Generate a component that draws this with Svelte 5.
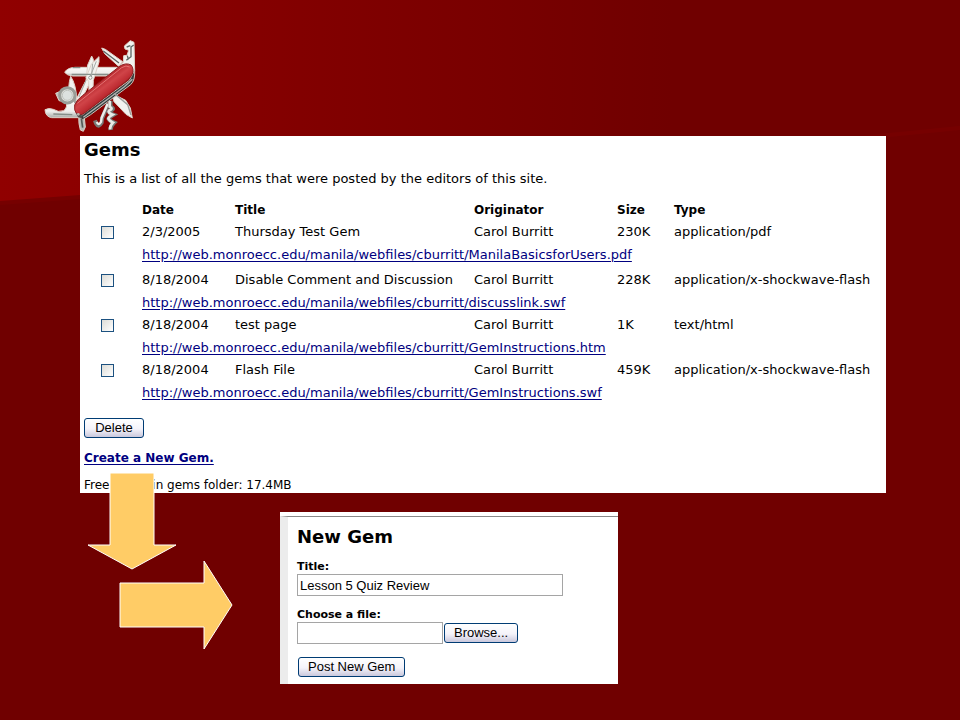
<script>
  const gems = [
    { date: '2/3/2005', title: 'Thursday Test Gem', size: '230K', type: 'application/pdf', file: 'ManilaBasicsforUsers.pdf' },
    { date: '8/18/2004', title: 'Disable Comment and Discussion', size: '228K', type: 'application/x-shockwave-flash', file: 'discusslink.swf' },
    { date: '8/18/2004', title: 'test page', size: '1K', type: 'text/html', file: 'GemInstructions.htm' },
    { date: '8/18/2004', title: 'Flash File', size: '459K', type: 'application/x-shockwave-flash', file: 'GemInstructions.swf' }
  ];
  const base = 'http://web.monroecc.edu/manila/webfiles/cburritt/';
  let title = $state('Lesson 5 Quiz Review');
  let path = $state('');
</script>

<div class="slide">
  <svg class="swoosh" viewBox="0 0 960 720" preserveAspectRatio="none" aria-hidden="true">
    <defs>
      <linearGradient id="glow" x1="0" x2="1" y1="0" y2="0">
        <stop offset="0" stop-color="#900000" />
        <stop offset=".12" stop-color="#8b0000" />
        <stop offset=".7" stop-color="#700000" />
        <stop offset="1" stop-color="#700000" />
      </linearGradient>
    </defs>
    <path d="M0 0H960V130Q520 175 80 199L0 205Z" fill="#760000" />
    <path d="M0 0H960V126Q520 171 80 195L0 201Z" fill="url(#glow)" />
  </svg>

  <header>
    <svg class="knife" viewBox="0 0 360 330" role="img" aria-label="Pocket knife">
      <defs>
        <linearGradient id="handle" gradientUnits="userSpaceOnUse" x1="205" y1="160" x2="238" y2="204">
          <stop offset="0" stop-color="#b92b30" />
          <stop offset=".35" stop-color="#d04448" />
          <stop offset=".7" stop-color="#c02e34" />
          <stop offset="1" stop-color="#a11c22" />
        </linearGradient>
        <linearGradient id="steel" x1="0" y1="0" x2="0" y2="1">
          <stop offset="0" stop-color="#fafaf8" />
          <stop offset=".65" stop-color="#eeeeec" />
          <stop offset="1" stop-color="#a9aca8" />
        </linearGradient>
      </defs>
      <g fill="#f2f2ef" stroke="#ddd2c8" stroke-width="3" stroke-linejoin="round">
        <path d="M104 127Q112 113 135 112H262V138H128Q111 137 104 127Z" fill="url(#steel)" />
        <path d="M215 54L226 58L278 95L266 109L224 71Z" />
        <path d="M268 108L280 96L281 77L291 76L296 61L285 57L283 48L301 32L312 37L314 122L292 132Z" />
        <path d="M122 139Q139 164 140 210L132 228L116 216Q113 168 122 139Z" />
        <path d="M45 239Q57 233 70 238Q84 248 101 242Q114 233 108 213L133 208L145 263L65 263Q46 260 45 239Z" fill="url(#steel)" />
        <path d="M77 190L98 181L97 214L87 212Z" fill="#c2c5be" />
        <path d="M185 78L190 88L190 144L180 157L151 216L139 207L168 151L173 105Z" />
        <path d="M207 80L207 96L190 151L188 206L178 211L176 154L168 143L185 101Z" />
        <path d="M245 190L287 211L301 234L307 264L288 253L252 215Z" />
        <path d="M146 258L163 263L166 291L160 304L151 300L147 281Z" fill="#babcb8" />
      </g>
      <path d="M220 63L267 99M289 91L303 80V51L311 45M292 77L295 89M290 51L301 47" fill="none" stroke="#5d6865" stroke-width="4" />
      <path d="M128 113H151M125 133H235M70 252L127 254M135 220V191" fill="none" stroke="#868e89" stroke-width="4" />
      <path d="M188 101L184 143M199 94L180 141M168 151L147 201" fill="none" stroke="#a6aaa6" stroke-width="3" />
      <circle cx="181" cy="143" r="5" fill="#f7f7f4" stroke="#6e7874" stroke-width="2" />
      <circle cx="112" cy="196" r="23" fill="#e2e4e0" stroke="#9a9d98" stroke-width="9" />
      <circle cx="112" cy="196" r="15" fill="#dce1df" stroke="#bec2bd" stroke-width="3" />
      <path d="M235 221L216 265L215 278Q206 295 198 280L195 271" fill="none" stroke="#777a77" stroke-width="12" />
      <path d="M233 221L215 263L213 276Q206 288 200 276" fill="none" stroke="#eeeeeb" stroke-width="7" />
      <path d="M241 212V230Q257 237 239 242Q234 248 250 254Q237 262 236 266Q239 272 252 278Q241 288 242 300" fill="none" stroke="#767b78" stroke-width="13" />
      <path d="M239 213V230Q252 237 237 242Q232 248 248 254Q235 262 235 266Q238 272 249 278Q239 288 240 298" fill="none" stroke="#e8e9e5" stroke-width="8" />
      <path d="M158 269L182 254L302 164Q316 151 314 121L298 151L148 261Z" fill="#383d3d" stroke="#cbc1b8" stroke-width="3" />
      <path d="M160 262L283 170L307 148" fill="none" stroke="#aeb5b2" stroke-width="4" />
      <path d="M134 225Q142 208 157 197L270 108Q288 97 303 105Q314 117 305 137L291 152L165 248Q150 260 139 250Q132 242 134 225Z" fill="url(#handle)" stroke="#8e2021" stroke-width="3" />
      <path d="M142 220L275 113Q289 104 299 111" fill="none" stroke="#e47373" stroke-width="3" />
      <path d="M252 190L293 224L303 255" fill="none" stroke="#9b9e9b" stroke-width="4" />
      <path d="M137 248Q145 256 155 254L157 265L144 262Z" fill="#514b49" />
      <circle cx="145" cy="253" r="4" fill="#bbb7b1" />
      <path d="M154 265L158 293" stroke="#545b58" stroke-width="5" />
    </svg>
  </header>

  <main class="gems">
    <h1>Gems</h1>
    <p class="intro">This is a list of all the gems that were posted by the editors of this site.</p>
    <table>
      <thead>
        <tr><td class="check"></td><th class="date">Date</th><th class="title">Title</th><th class="who">Originator</th><th class="size">Size</th><th>Type</th></tr>
      </thead>
      <tbody>
        {#each gems as gem}
          <tr>
            <td class="check"><input type="checkbox" aria-label={`Select ${gem.title}`} /></td>
            <td>{gem.date}</td><td>{gem.title}</td><td>Carol Burritt</td><td>{gem.size}</td><td>{gem.type}</td>
          </tr>
          <tr class="address"><td></td><td colspan="5"><a href={base + gem.file}>{base}{gem.file}</a></td></tr>
        {/each}
      </tbody>
    </table>
    <button type="button" class="delete">Delete</button>
    <p class="create"><a href="#new-gem">Create a New Gem.</a></p>
    <p class="free">Free space in gems folder: 17.4MB</p>
  </main>

  <section class="lower">
    <svg class="arrows" viewBox="0 0 146 178" aria-hidden="true">
      <path d="M22 0H66V72H88L44 96L0 72H22Z" />
      <path d="M32 110H116V88L144 132L116 176V154H32Z" />
    </svg>
    <form id="new-gem" onsubmit={(e) => e.preventDefault()}>
      <div class="form-body">
        <h2>New Gem</h2>
        <label for="gem-title">Title:</label>
        <input id="gem-title" type="text" bind:value={title} />
        <label for="gem-file">Choose a file:</label>
        <div class="file-row">
          <input id="gem-file" type="text" bind:value={path} />
          <button type="button">Browse...</button>
        </div>
        <button type="submit" class="post">Post New Gem</button>
      </div>
    </form>
  </section>
</div>

<style>
  :global(body) { margin: 0; background: #700000; }
  .slide {
    position: relative;
    box-sizing: border-box;
    min-height: 100vh;
    padding: 36px 74px 36px 80px;
    background: #700000;
    color: #000;
    font: 12px/16px Verdana, "DejaVu Sans", sans-serif;
  }
  .swoosh { position: absolute; inset: 0; width: 100%; height: 100%; }
  header { position: relative; height: 100px; }
  .knife { position: absolute; left: -50px; top: -6px; width: 120px; height: 110px; }
  h1, h2, p { margin: 0; }
  h1, h2 { font-size: 18px; line-height: 24px; }
  .gems {
    position: relative;
    box-sizing: border-box;
    padding: 2px 4px 0;
    background: #fff;
  }
  .intro { margin-top: 9px; font-size: 13px; }
  table { width: 100%; margin-top: 12px; border-collapse: collapse; table-layout: fixed; }
  th, td { padding: 0; height: 22px; text-align: left; vertical-align: middle; white-space: nowrap; }
  th { font-size: 12px; }
  td { font-size: 13px; }
  .address td { height: 23px; }
  .address:nth-child(2) td { padding-bottom: 3px; }
  .check { width: 58px; }
  .date { width: 93px; }
  .title { width: 239px; }
  .who { width: 143px; }
  .size { width: 57px; }
  a { color: #000080; text-underline-offset: 2px; }
  input[type="checkbox"] {
    appearance: none;
    display: block;
    box-sizing: border-box;
    width: 13px;
    height: 13px;
    margin: 0 0 0 17px;
    border: 1px solid #1c5180;
    background: linear-gradient(135deg, #dcdcd7, #fff);
  }
  input[type="checkbox"]:checked { background: #21a121; }
  button {
    box-sizing: border-box;
    height: 20px;
    padding: 0 9px;
    border: 1px solid #003c74;
    border-radius: 3px;
    background: linear-gradient(#fff, #f4f3fa 55%, #cac8dc);
    color: #000;
    font: 13px/16px "Liberation Sans", Arial, sans-serif;
    white-space: nowrap;
  }
  .delete { display: block; width: 60px; margin-top: 14px; }
  .create { margin-top: 12px; font-weight: bold; }
  .free { margin-top: 11px; }
  .lower { position: relative; display: flex; align-items: flex-start; padding-left: 8px; }
  .arrows { width: 146px; height: 178px; margin-top: -20px; flex: none; overflow: visible; }
  .arrows path { fill: #fc6; stroke: #fff; stroke-width: 1; }
  form {
    box-sizing: border-box;
    width: 338px;
    margin: 19px 0 0 46px;
    padding-top: 4px;
    background: #fff;
  }
  .form-body {
    padding: 8px 9px 7px;
    border-top: 1px solid #888;
    border-left: 8px solid #ececec;
  }
  label { display: block; margin-top: 12px; font-size: 11px; line-height: 14px; font-weight: bold; }
  h2 + label { margin-top: 11px; }
  input[type="text"] {
    display: block;
    box-sizing: border-box;
    width: 266px;
    height: 22px;
    padding: 0 2px;
    border: 1px solid #a5a5a5;
    background: #fff;
    color: #000;
    font: 13px/18px "Liberation Sans", Arial, sans-serif;
  }
  .file-row { display: flex; align-items: center; gap: 1px; }
  .file-row input[type="text"] { width: 146px; }
  .post { display: block; margin: 13px 0 0 1px; }
</style>
